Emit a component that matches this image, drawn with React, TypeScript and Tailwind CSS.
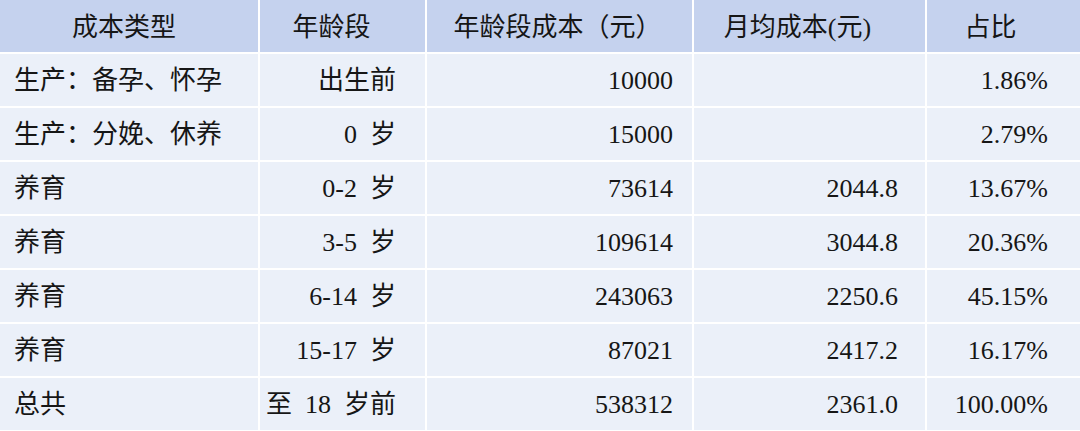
const header = [
  { text: '成本类型', cls: 'justify-center pr-[10px]' },
  { text: '年龄段', cls: 'justify-center pr-[22px]' },
  { text: '年龄段成本（元）', cls: 'justify-center pr-[4px]' },
  { text: '月均成本(元)', cls: 'justify-center pr-[24px]' },
  { text: '占比', cls: 'justify-center pr-[26px]' },
];

// double spaces: the source font uses a half-em space between digits and 岁
const rows = [
  ['生产：备孕、怀孕', '出生前', '10000', '', '1.86%'],
  ['生产：分娩、休养', '0  岁', '15000', '', '2.79%'],
  ['养育', '0-2  岁', '73614', '2044.8', '13.67%'],
  ['养育', '3-5  岁', '109614', '3044.8', '20.36%'],
  ['养育', '6-14  岁', '243063', '2250.6', '45.15%'],
  ['养育', '15-17  岁', '87021', '2417.2', '16.17%'],
  ['总共', '至  18  岁前', '538312', '2361.0', '100.00%'],
];

const cellPad = ['justify-start pl-[14px]', 'justify-end pr-[29px]', 'justify-end pr-[19px]', 'justify-end pr-[27px]', 'justify-end pr-[32px]'];

export default function App() {
  return (
    <div className="w-[1080px] h-[431px] overflow-hidden bg-white text-[26px] text-[#161616] leading-none font-['Liberation_Serif','Noto_Sans_CJK_SC',serif]">
      <div className="grid grid-cols-[258px_165px_265px_231px_1fr] grid-rows-[52px_repeat(7,52px)] gap-[2px]">
        {header.map((h) => (
          <div key={h.text} className={`flex items-center pt-[4px] bg-[#c5d2ee] whitespace-pre ${h.cls}`}>
            {h.text}
          </div>
        ))}
        {rows.map((r, i) =>
          r.map((c, j) => (
            <div key={`${i}-${j}`} className={`flex items-center pt-[2px] bg-[#ebf0f9] whitespace-pre ${cellPad[j]}`}>
              {c}
            </div>
          ))
        )}
      </div>
    </div>
  );
}
